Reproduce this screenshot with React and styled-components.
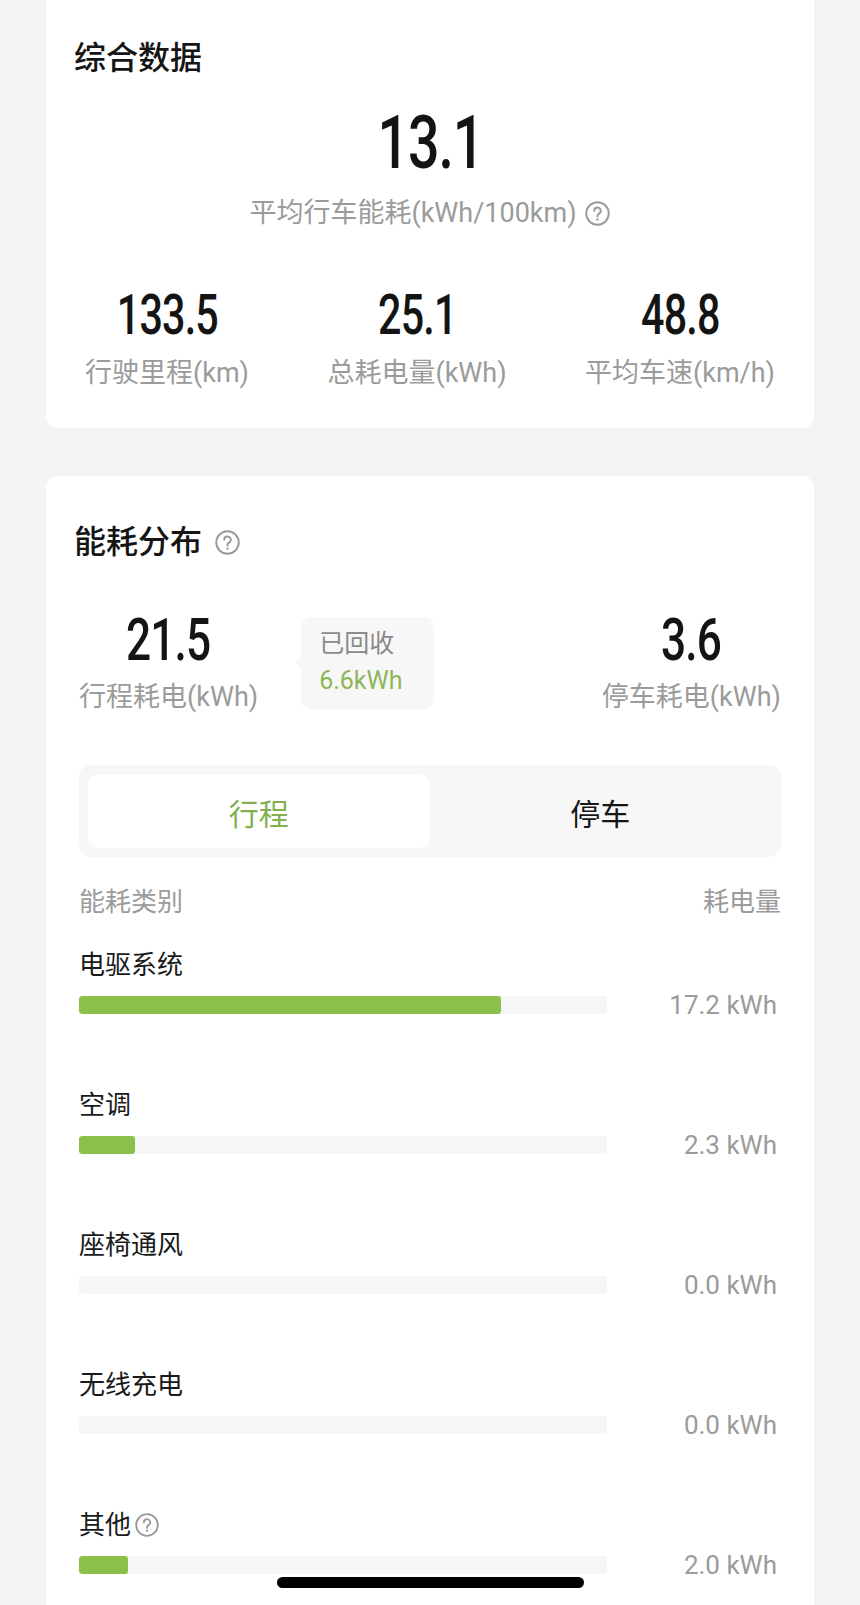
import React from "react";
import styled, { createGlobalStyle } from "styled-components";

const GlobalStyle = createGlobalStyle`
  html, body {
    margin: 0;
    padding: 0;
    background: #f4f4f4;
  }
  body {
    font-family: Roboto, "Noto Sans CJK SC", sans-serif;
    color: #1c1c1c;
  }
`;

const Screen = styled.div`
  position: relative;
  height: 1605px;
  overflow: hidden;
  padding: 0 46px;
  display: flex;
  flex-direction: column;
  gap: 48px;
  box-sizing: border-box;
`;

const Card = styled.section`
  background: #fff;
  border-radius: ${(p) => (p.$cut ? "0 0 12px 12px" : "12px")};
  padding: ${(p) => p.$pad};
  display: flex;
  flex-direction: column;
  flex-shrink: 0;
`;

const Title = styled.h2`
  margin: 0 0 0 -5px;
  font-size: 32px;
  line-height: 37px;
  font-weight: 500;
  display: flex;
  align-items: center;
  gap: 12px;
  color: #151515;
`;

const HelpSvg = styled.svg`
  color: #9a9a9a;
  flex-shrink: 0;
`;

// circled question mark
const Help = ({ size = 24 }) => (
  <HelpSvg width={size} height={size} viewBox="0 0 24 24" fill="none">
    <circle cx="12" cy="12" r="10" stroke="currentColor" strokeWidth="1.7" />
    <path
      d="M9.1 9.6a2.9 2.9 0 1 1 4.3 2.5c-.9.5-1.4 1.1-1.4 2v.7"
      stroke="currentColor"
      strokeWidth="1.7"
      strokeLinecap="round"
    />
    <circle cx="12" cy="17.4" r="1.05" fill="currentColor" />
  </HelpSvg>
);

const Num = styled.div`
  font-family: Roboto, sans-serif;
  font-weight: 500;
  font-size: ${(p) => p.$size}px;
  line-height: 1;
  color: #141414;
  transform: scaleX(0.75);
  letter-spacing: -0.02em;
`;

const Hero = styled.div`
  display: flex;
  flex-direction: column;
  align-items: center;
  margin-top: 29px;
  gap: 15px;
`;

const Caption = styled.div`
  font-size: 27px;
  line-height: 36px;
  color: #9b9b9b;
  display: flex;
  align-items: center;
  gap: 7px;
  white-space: nowrap;
`;

const StatRow = styled.div`
  display: flex;
  justify-content: space-between;
  align-items: center;
  padding: 0 ${(p) => p.$side || 0}px;
  margin-top: ${(p) => p.$top}px;
`;

const Stat = styled.div`
  display: flex;
  flex-direction: column;
  align-items: center;
  gap: ${(p) => p.$gap}px;
`;

const LeftGroup = styled.div`
  display: flex;
  align-items: center;
  gap: 43px;
`;

const Recovered = styled.div`
  position: relative;
  background: #f7f7f7;
  border-radius: 10px;
  padding: 8px 18px 10px 18px;
  width: 133px;
  height: 92px;
  box-sizing: border-box;
  font-size: 25px;
  line-height: 37px;
  color: #8a8a8a;

  &::before {
    content: "";
    position: absolute;
    left: -6px;
    top: 40px;
    border-style: solid;
    border-width: 6px 6px 6px 0;
    border-color: transparent #f7f7f7 transparent transparent;
  }
`;

const Green = styled.div`
  color: #8db65a;
`;

const Tabs = styled.div`
  margin-top: 50px;
  background: #f7f7f7;
  border-radius: 12px;
  padding: 10px 10px 9px 9px;
  display: grid;
  grid-template-columns: 1fr 1fr;
`;

const Tab = styled.div`
  height: 73px;
  border-radius: 10px;
  background: ${(p) => (p.$active ? "#fff" : "transparent")};
  color: ${(p) => (p.$active ? "#82b04f" : "#161616")};
  font-size: 30px;
  display: flex;
  align-items: center;
  justify-content: center;
`;

const ListHead = styled.div`
  margin-top: 27px;
  display: flex;
  justify-content: space-between;
  font-size: 26px;
  line-height: 36px;
  color: #9b9b9b;
`;

const List = styled.div`
  margin-top: 27px;
  display: flex;
  flex-direction: column;
  gap: 79px;
`;

const Item = styled.div`
  display: flex;
  flex-direction: column;
  gap: 7px;
`;

const ItemLabel = styled.div`
  font-size: 26px;
  line-height: 36px;
  color: #1a1a1a;
  display: flex;
  align-items: center;
  gap: 3px;
`;

const BarRow = styled.div`
  display: grid;
  grid-template-columns: 528px 1fr;
  align-items: center;
  height: 18px;
`;

const Track = styled.div`
  height: 18px;
  border-radius: 3px;
  background: #f6f6f6;
  overflow: hidden;
`;

const Fill = styled.div`
  height: 100%;
  border-radius: 3px;
  background: #8bc04a;
`;

const Value = styled.div`
  text-align: right;
  padding-right: 4px;
  font-size: 26px;
  color: #9b9b9b;
  white-space: nowrap;
`;

const HomeBar = styled.div`
  position: absolute;
  left: 277px;
  bottom: 17px;
  width: 307px;
  height: 11px;
  border-radius: 6px;
  background: #000;
`;

const items = [
  { name: "电驱系统", value: 17.2 },
  { name: "空调", value: 2.3 },
  { name: "座椅通风", value: 0 },
  { name: "无线充电", value: 0 },
  { name: "其他", value: 2.0, help: true },
];

const TOTAL = 21.5;

export default function App() {
  return (
    <>
      <GlobalStyle />
      <Screen>
        <Card $cut $pad="40px 33px 37px">
          <Title>综合数据</Title>
          <Hero>
            <Num $size={74}>13.1</Num>
            <Caption>
              平均行车能耗(kWh/100km)
              <Help size={27} />
            </Caption>
          </Hero>
          <StatRow $top={57} $side={6}>
            <Stat $gap={12}>
              <Num $size={55}>133.5</Num>
              <Caption>行驶里程(km)</Caption>
            </Stat>
            <Stat $gap={12}>
              <Num $size={55}>25.1</Num>
              <Caption>总耗电量(kWh)</Caption>
            </Stat>
            <Stat $gap={12}>
              <Num $size={55}>48.8</Num>
              <Caption>平均车速(km/h)</Caption>
            </Stat>
          </StatRow>
        </Card>

        <Card $pad="48px 33px 60px">
          <Title>
            能耗分布
            <Help size={27} />
          </Title>
          <StatRow $top={49}>
            <LeftGroup>
              <Stat $gap={10}>
                <Num $size={59}>21.5</Num>
                <Caption>行程耗电(kWh)</Caption>
              </Stat>
              <Recovered>
                已回收
                <Green>6.6kWh</Green>
              </Recovered>
            </LeftGroup>
            <Stat $gap={10}>
              <Num $size={59}>3.6</Num>
              <Caption>停车耗电(kWh)</Caption>
            </Stat>
          </StatRow>

          <Tabs>
            <Tab $active>行程</Tab>
            <Tab>停车</Tab>
          </Tabs>

          <ListHead>
            <span>能耗类别</span>
            <span>耗电量</span>
          </ListHead>

          <List>
            {items.map((it) => (
              <Item key={it.name}>
                <ItemLabel>
                  {it.name}
                  {it.help && <Help size={26} />}
                </ItemLabel>
                <BarRow>
                  <Track>
                    {it.value > 0 && (
                      <Fill style={{ width: `${(it.value / TOTAL) * 100}%` }} />
                    )}
                  </Track>
                  <Value>{it.value.toFixed(1)} kWh</Value>
                </BarRow>
              </Item>
            ))}
          </List>
        </Card>
        <HomeBar />
      </Screen>
    </>
  );
}
